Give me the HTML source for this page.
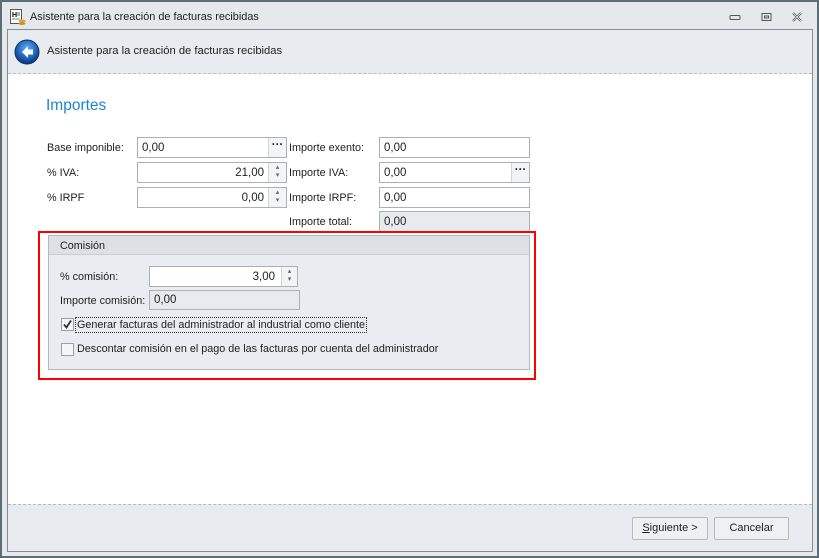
<!DOCTYPE html>
<html><head><meta charset="utf-8"><style>
*{box-sizing:border-box;margin:0;padding:0}
body{width:819px;height:558px;overflow:hidden;background:#e6e9ec;font-family:"Liberation Sans",sans-serif;font-size:10.8px;color:#1e1e1e;position:relative}
.a{position:absolute}
.box{position:absolute;background:#fff;border:1px solid #abb0b6;height:21px;line-height:20px;padding:0 4px;font-size:11.5px}
.gray{background:#e8ebee}
.r{text-align:right}
.btnr{position:absolute;right:0;top:0;bottom:0;width:18px;border-left:1px solid #d0d4d8;background:#f2f4f6}
.lbl{position:absolute;font-size:10.8px}
.cb{position:absolute;width:13px;height:13px;border:1px solid #9aa0a6;background:#f4f5f6}
.btn{position:absolute;height:23px;border:1px solid #b4b9be;border-radius:2px;background:#eef0f2;text-align:center;line-height:21px;font-size:11px}
</style></head><body>
<div class="a" style="left:0;top:0;width:819px;height:558px;border:2px solid #5f6b75"></div>
<svg class="a" style="left:10px;top:9px" width="16" height="17" viewBox="0 0 16 17"><rect x="0.5" y="0.5" width="11" height="14" fill="#fff" stroke="#555"/><text x="2" y="8" font-size="7" font-family="Liberation Sans" font-weight="bold">H</text><line x1="7" y1="4" x2="10" y2="4" stroke="#666"/><line x1="7" y1="6" x2="10" y2="6" stroke="#666"/><line x1="2" y1="10" x2="10" y2="10" stroke="#888"/><ellipse cx="12" cy="12" rx="3.5" ry="1.5" fill="#e0a020"/><ellipse cx="12" cy="14.5" rx="3.5" ry="1.5" fill="#d09018"/></svg>
<div class="a" style="left:30px;top:11px;font-size:10.9px">Asistente para la creación de facturas recibidas</div>
<svg class="a" style="left:728px;top:12px" width="80" height="10"><rect x="2" y="3.5" width="10" height="4" rx="1" fill="none" stroke="#555"/><rect x="34" y="1.5" width="9" height="7" fill="none" stroke="#555"/><rect x="36.5" y="4" width="4" height="2" fill="none" stroke="#555"/><path d="M65 1 L73 9 M73 1 L65 9" stroke="#555" stroke-width="2.2"/><path d="M65 1 L73 9 M73 1 L65 9" stroke="#eee" stroke-width="0.8"/></svg>
<div class="a" style="left:7px;top:29px;width:806px;height:523px;border:1px solid #858c93;background:#fff"></div>
<div class="a" style="left:8px;top:30px;width:804px;height:44px;background:#e8ecf0;border-bottom:1px dashed #b8bdc2"></div>
<svg class="a" style="left:14px;top:39px" width="26" height="26"><defs><radialGradient id="g" cx="50%" cy="35%" r="60%"><stop offset="0" stop-color="#5ab0ff"/><stop offset="1" stop-color="#0a3c8c"/></radialGradient></defs><circle cx="13" cy="13" r="12" fill="url(#g)" stroke="#0b2f6a"/><path d="M14 7 L8 13 L14 19 L14 15.5 L19 15.5 L19 10.5 L14 10.5 Z" fill="#fff"/></svg>
<div class="a" style="left:47px;top:45px;font-size:11.2px">Asistente para la creación de facturas recibidas</div>
<div class="a" style="left:8px;top:504px;width:804px;height:47px;background:#e8ecf0;border-top:1px dashed #b8bdc2"></div>
<div class="a" style="left:46px;top:97px;font-size:15.5px;color:#1c86d0">Importes</div>
<div class="lbl" style="left:47px;top:142px">Base imponible:</div>
<div class="box" style="left:137px;top:137px;width:150px">0,00<div class="btnr" style="text-align:center;line-height:14px;font-weight:bold">···</div></div>
<div class="lbl" style="left:47px;top:167px">% IVA:</div>
<div class="box r" style="left:137px;top:162px;width:150px;padding-right:22px">21,00<div class="btnr" style="font-size:7px;line-height:8px;text-align:center;color:#666;padding-top:1px">▴<br>▾</div></div>
<div class="lbl" style="left:47px;top:192px">% IRPF</div>
<div class="box r" style="left:137px;top:187px;width:150px;padding-right:22px">0,00<div class="btnr" style="font-size:7px;line-height:8px;text-align:center;color:#666;padding-top:1px">▴<br>▾</div></div>
<div class="lbl" style="left:289px;top:142px">Importe exento:</div>
<div class="box" style="left:379px;top:137px;width:151px">0,00</div>
<div class="lbl" style="left:289px;top:167px">Importe IVA:</div>
<div class="box" style="left:379px;top:162px;width:151px">0,00<div class="btnr" style="text-align:center;line-height:14px;font-weight:bold">···</div></div>
<div class="lbl" style="left:289px;top:192px">Importe IRPF:</div>
<div class="box" style="left:379px;top:187px;width:151px">0,00</div>
<div class="lbl" style="left:289px;top:216px">Importe total:</div>
<div class="box gray" style="left:379px;top:211px;width:151px">0,00</div>
<div class="a" style="left:38px;top:231px;width:498px;height:149px;border:2px solid #f00"></div>
<div class="a" style="left:48px;top:235px;width:482px;height:135px;border:1px solid #b4b9be;background:#e9ecf0"></div>
<div class="a" style="left:49px;top:236px;width:480px;height:19px;background:#dde1e6;border-bottom:1px solid #c8cdd2"></div>
<div class="lbl" style="left:60px;top:240px">Comisión</div>
<div class="lbl" style="left:60px;top:271px">% comisión:</div>
<div class="box r" style="left:149px;top:266px;width:149px;padding-right:22px">3,00<div class="btnr" style="width:16px;font-size:7px;line-height:8px;text-align:center;color:#666;padding-top:1px">▴<br>▾</div></div>
<div class="lbl" style="left:60px;top:295px">Importe comisión:</div>
<div class="box gray" style="left:149px;top:290px;width:151px;height:20px;line-height:19px">0,00</div>
<div class="cb" style="left:61px;top:318px"><svg width="11" height="11" style="position:absolute;left:0;top:0"><path d="M2 5.5 L4.5 8.5 L9 1.5" fill="none" stroke="#333" stroke-width="1.8"/></svg></div>
<div class="lbl" style="left:75px;top:317px;border:1px dotted #333;padding:0 1px;line-height:14px">Generar facturas del administrador al industrial como cliente</div>
<div class="cb" style="left:61px;top:343px"></div>
<div class="lbl" style="left:77px;top:343px">Descontar comisión en el pago de las facturas por cuenta del administrador</div>
<div class="btn" style="left:632px;top:517px;width:76px"><u>S</u>iguiente &gt;</div>
<div class="btn" style="left:714px;top:517px;width:75px">Cancelar</div>
</body></html>
